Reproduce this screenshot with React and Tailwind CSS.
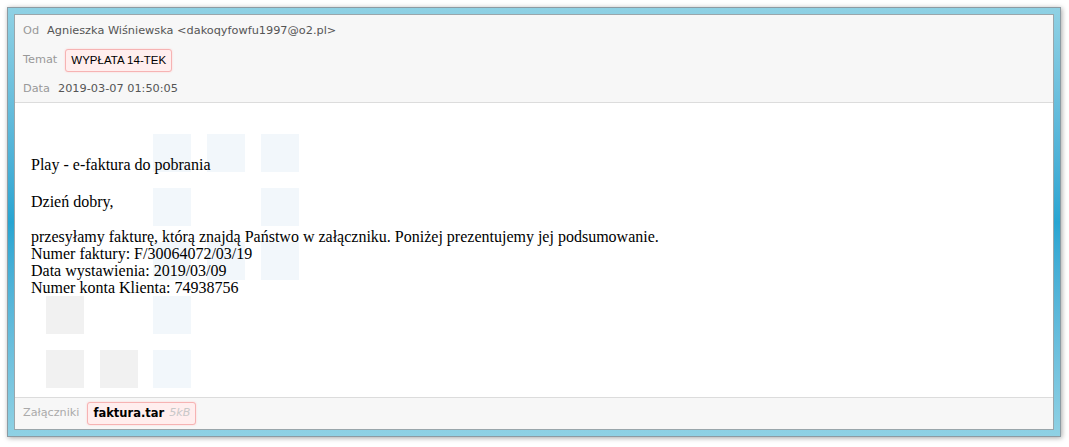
import React from "react"

const mark = [
  "..BBB",
  "..B.B",
  "..BBB",
  "G.B..",
  "GGB.."
]

function Watermark() {
  return (
    <div className="absolute left-[31px] top-[31px] grid grid-cols-[repeat(5,38px)] grid-rows-[repeat(5,38px)] gap-x-[15.7px] gap-y-[16px]">
      {mark.join("").split("").map((c, i) => (
        <div
          key={i}
          className={
            c === "B" ? "bg-[#f2f7fb]" : c === "G" ? "bg-[#f1f1f1]" : ""
          }
        />
      ))}
    </div>
  )
}

function Row({ label, children }) {
  return (
    <div className="flex h-[29px] items-center gap-2">
      <span className="text-[#999]">{label}</span>
      {children}
    </div>
  )
}

function Badge({ children, className = "" }) {
  return (
    <span
      className={
        "flex h-[23px] items-center rounded-[3px] border border-[#f6b3b3] bg-[#ffeeee] px-[5px] shadow-[0_0_2px_#fcc] " +
        className
      }
    >
      {children}
    </span>
  )
}

export default function App() {
  return (
    <div className="h-[447px] w-[1069px] bg-white pl-[7px] pt-[7px]">
      <div className="h-[430px] w-[1054px] border border-[#8c9ba3] bg-gradient-to-b from-[#8fd1e4] via-[#27a5d2] to-[#8fd1e4] p-[6px] shadow-[1px_1px_5px_rgba(0,0,0,0.35)]">
        <div className="flex h-full flex-col border border-[#9aa6ab] bg-white font-['DejaVu_Sans',sans-serif] text-[11.3px] text-[#555]">
          <div className="h-[88px] border-b border-[#dcdcdc] bg-[#f7f7f7] pl-2 pt-[2px]">
            <Row label="Od">
              <span>Agnieszka Wiśniewska &lt;dakoqyfowfu1997@o2.pl&gt;</span>
            </Row>
            <Row label="Temat">
              <Badge className="font-['Liberation_Sans',Arial,sans-serif] text-[11.5px] text-black">
                WYPŁATA 14-TEK
              </Badge>
            </Row>
            <Row label="Data">
              <span>2019-03-07 01:50:05</span>
            </Row>
          </div>
          <div className="relative flex-1 overflow-hidden bg-white">
            <Watermark />
            <div className="relative pl-4 pt-[53px] font-['Liberation_Serif','Times_New_Roman',serif] text-[16px] leading-[17.3px] text-black">
              <p>Play - e-faktura do pobrania</p>
              <p className="mt-[20px]">Dzień dobry,</p>
              <p className="mt-[17px]">
                przesyłamy fakturę, którą znajdą Państwo w załączniku. Poniżej
                prezentujemy jej podsumowanie.
                <br />
                Numer faktury: F/30064072/03/19
                <br />
                Data wystawienia: 2019/03/09
                <br />
                Numer konta Klienta: 74938756
              </p>
            </div>
          </div>
          <div className="flex h-[32px] items-center gap-2 border-t border-[#dcdcdc] bg-[#f7f7f7] pl-2 text-[11.2px]">
            <span className="text-[#aaa]">Załączniki</span>
            <Badge className="gap-[5px]">
              <span className="text-[11.5px] font-bold text-black">faktura.tar</span>
              <span className="italic text-[#c8c8c8]">5kB</span>
            </Badge>
          </div>
        </div>
      </div>
    </div>
  )
}
